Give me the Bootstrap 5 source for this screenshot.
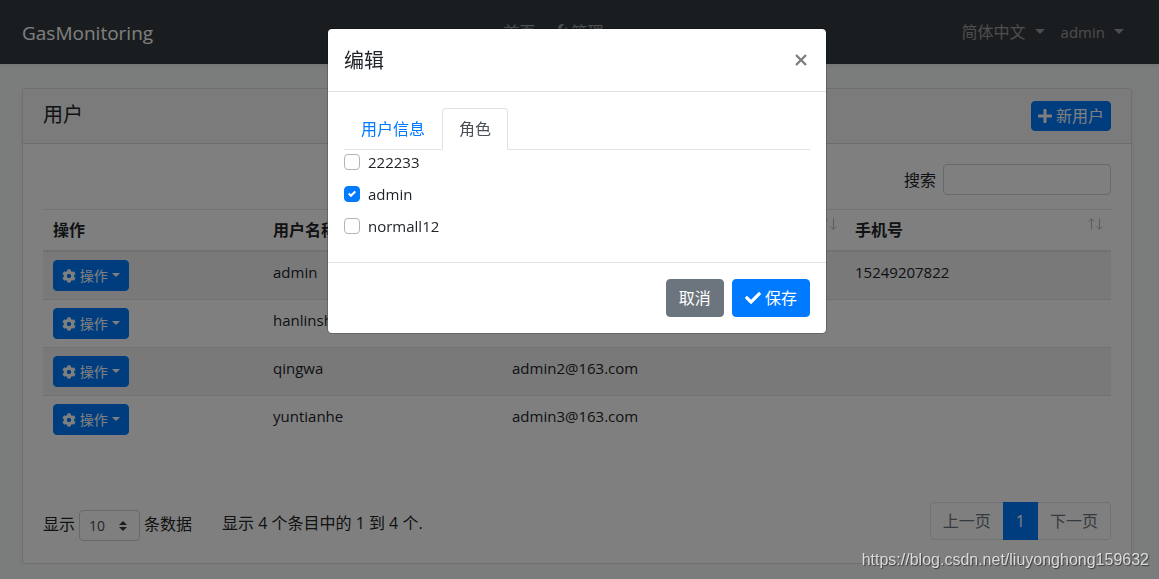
<!DOCTYPE html>
<html lang="zh-CN">
<head>
<meta charset="utf-8">
<meta name="viewport" content="width=device-width, initial-scale=1">
<title>GasMonitoring</title>
<link href="https://cdn.jsdelivr.net/npm/bootstrap@5.3.0/dist/css/bootstrap.min.css" rel="stylesheet">
<style>
  :root { --brand-blue: #007bff; }
  body {
    font-family: "Open Sans", "Noto Sans CJK SC", sans-serif;
    font-size: 16px; line-height: 24px; color: #212529; background: #f7faf9;
  }
  .latin { font-size: 15px; }
  .page-gutter { padding-left: 22px; padding-right: 27px; }
  .icon { fill: currentColor; display: inline-block; vertical-align: -2px; }

  .topbar { background: #343a40; min-height: 64px; position: relative; }
  .topbar .navbar-brand { font-size: 19px; line-height: 30px; color: #fff; margin: 0; padding: 5px 0 3px; }
  .topbar .nav-link { color: rgba(255,255,255,.5); padding: 8px; }
  .dropdown-toggle::after { margin-left: 9px; vertical-align: 4px; border-width: 5px 5px 0; }

  .panel { --bs-card-border-color: rgba(0,0,0,.125); --bs-card-border-radius: 4px; }
  .panel .card-header { padding: 12px 20px; background: rgba(0,0,0,.03); min-height: 55px; }
  .panel .card-header h1 { font-size: 20px; line-height: 28px; font-weight: 400; margin: 0; }
  .panel .card-body { padding: 20px 20px 22px; }

  .btn { --bs-btn-border-radius: 4px; line-height: 24px; }
  .btn-primary { --bs-btn-bg: var(--brand-blue); --bs-btn-border-color: var(--brand-blue); }
  .btn-secondary { --bs-btn-bg: #6c757d; --bs-btn-border-color: #6c757d; }
  .btn-new { padding: 2px 6px; }
  .btn-act { font-size: 14px; line-height: 21px; padding: 4px 8px; }
  .btn-act::after { margin-left: 4px; border-width: 4px 4px 0; }

  .search-row { margin-bottom: 14px; }
  .search-row label { margin-right: 7px; }
  .search-box { width: 168px; height: 31px; border-color: #ced4da; border-radius: 4px; }
  .user-table { table-layout: fixed; --bs-table-color: #212529; }
  .user-table > :not(caption) > * > * { padding: 8px 10px; border-bottom: 0; border-top: 1px solid #dee2e6; box-shadow: none; }
  .user-table > thead > tr > th { border-bottom: 2px solid #dee2e6; line-height: 24px; vertical-align: top; }
  .user-table > tbody > tr:first-child > td { border-top: 0; }
  .user-table > tbody > tr:nth-child(odd) > td { background: #f2f2f2; }
  .col-act { width: 220px; } .col-user { width: 239px; } .col-phone { width: 266px; }
  .sort-mark { fill: none; stroke: #212529; opacity: .3; margin: -1px -2px 0 0; }

  .table-foot { margin-top: 59px; }
  .table-foot .foot-text { padding-bottom: 3px; }
  .table-foot .foot-info { padding: 9px 0 0 30px; }
  .len-select {
    width: 61px; height: 31px; font-size: 14px; line-height: 21px; padding: 4px 8px 4px 9px; color: #495057;
    border-color: #ced4da; border-radius: 4px; background-size: 8px 10px; background-position: right 12px center;
    background-image: url("data:image/svg+xml,%3csvg xmlns='http://www.w3.org/2000/svg' viewBox='0 0 4 5'%3e%3cpath fill='%23343a40' d='M2 0L0 2h4zm0 5L0 3h4z'/%3e%3c/svg%3e");
  }
  .pagination { --bs-pagination-color: #6c757d; --bs-pagination-border-color: #dee2e6; --bs-pagination-border-radius: 4px; --bs-pagination-active-bg: var(--brand-blue); --bs-pagination-active-border-color: var(--brand-blue); }
  .pagination .page-link { padding: 6px 12px; line-height: 24px; background: #fff; }
  .pagination .active .page-link { background: var(--brand-blue); }

  .modal { padding-right: 5px; }
  .modal-content { --bs-modal-border-radius: 5px; border: 1px solid rgba(0,0,0,.2); }
  .modal-header { padding: 16px; border-color: #dee2e6; border-radius: 0; }
  .modal-title { font-size: 20px; line-height: 28px; font-weight: 400; padding-top: 2px; }
  .close-x { border: 0; background: none; padding: 0; width: 18px; height: 24px; color: #7f7f7f; }
  .modal-footer { padding: 16px; gap: 8px; border-color: #dee2e6; }
  .modal-footer > * { margin: 0; }
  .nav-tabs .nav-link { padding: 8px 16px; color: var(--brand-blue); border-radius: 4px 4px 0 0; line-height: 24px; }
  .nav-tabs .nav-link.active { color: #495057; }
  .role-check { display: flex; gap: 8px; margin-bottom: 8px; padding: 0; min-height: 24px; }
  .role-check .form-check-input { margin: 4px 0 0; float: none; border-color: #adb5bd; border-radius: 4px; width: 16px; height: 16px; }
  .role-check .form-check-input:checked {
    background-color: var(--brand-blue); border-color: var(--brand-blue); background-size: 8px 8px;
    background-image: url("data:image/svg+xml,%3csvg xmlns='http://www.w3.org/2000/svg' viewBox='0 0 8 8'%3e%3cpath fill='%23fff' d='M6.564.75l-3.59 3.612-1.538-1.55L0 4.26l2.974 2.99L8 2.193z'/%3e%3c/svg%3e");
  }
  .source-url {
    position: fixed; right: 10px; bottom: 8px; z-index: 1100; pointer-events: none;
    font: 16px/22px "Liberation Sans", Arial, sans-serif; color: rgba(255,255,255,.75); text-shadow: 1px 1px 1px rgba(0,0,0,.5);
  }
</style>
</head>
<body class="modal-open overflow-hidden">
<svg class="d-none" aria-hidden="true">
  <symbol id="i-cog" viewBox="0 0 512 512"><path d="M487.4 315.7l-42.600-24.600c4.300-23.200 4.300-47 0-70.200l42.600-24.600c4.900-2.800 7.100-8.600 5.500-14-11.100-35.600-30-67.800-54.700-94.600-3.800-4.100-10-5.100-14.800-2.300L380.800 110c-17.900-15.400-38.500-27.300-60.800-35.100V25.800c0-5.600-3.900-10.500-9.400-11.700-36.700-8.200-74.300-7.800-109.200 0-5.500 1.200-9.400 6.100-9.400 11.700V75c-22.200 7.900-42.800 19.800-60.800 35.100L88.700 85.500c-4.900-2.800-11-1.900-14.800 2.300-24.700 26.700-43.600 58.900-54.700 94.600-1.700 5.400.6 11.200 5.500 14L67.300 221c-4.300 23.200-4.300 47 0 70.200l-42.600 24.600c-4.900 2.800-7.100 8.600-5.500 14 11.100 35.600 30 67.800 54.700 94.600 3.800 4.100 10 5.100 14.800 2.300l42.600-24.600c17.900 15.400 38.500 27.300 60.800 35.100v49.200c0 5.600 3.900 10.500 9.400 11.700 36.700 8.200 74.300 7.800 109.200 0 5.500-1.200 9.400-6.100 9.400-11.700v-49.200c22.200-7.900 42.800-19.800 60.800-35.100l42.600 24.600c4.900 2.800 11 1.900 14.800-2.300 24.700-26.700 43.600-58.900 54.700-94.600 1.500-5.500-.7-11.300-5.600-14.100zM256 336c-44.100 0-80-35.900-80-80s35.900-80 80-80 80 35.900 80 80-35.900 80-80 80z"/></symbol>
  <symbol id="i-plus" viewBox="0 0 448 512"><path d="M416 208H272V64c0-17.670-14.330-32-32-32h-32c-17.670 0-32 14.330-32 32v144H32c-17.670 0-32 14.330-32 32v32c0 17.670 14.330 32 32 32h144v144c0 17.670 14.330 32 32 32h32c17.670 0 32-14.330 32-32V304h144c17.670 0 32-14.330 32-32v-32c0-17.670-14.330-32-32-32z"/></symbol>
  <symbol id="i-check" viewBox="0 0 512 512"><path d="M173.898 439.404l-166.400-166.400c-9.997-9.997-9.997-26.206 0-36.204l36.203-36.204c9.997-9.998 26.207-9.998 36.204 0L192 312.690 432.095 72.596c9.997-9.997 26.207-9.997 36.204 0l36.203 36.204c9.997 9.997 9.997 26.206 0 36.204l-294.400 294.401c-9.998 9.997-26.207 9.997-36.204-.001z"/></symbol>
  <symbol id="i-wrench" viewBox="0 0 512 512"><path d="M507.730 109.100c-2.240-9.030-13.540-12.090-20.120-5.510l-74.360 74.360-67.880-11.310-11.310-67.880 74.360-74.360c6.620-6.620 3.430-17.900-5.660-20.160-47.380-11.740-99.550.91-136.580 37.930-39.640 39.640-50.550 97.100-34.050 147.200L18.740 402.760c-24.990 24.990-24.990 65.510 0 90.500 24.990 24.990 65.510 24.990 90.500 0l213.210-213.210c50.120 16.710 107.470 5.680 147.370-34.220 37.070-37.070 49.700-89.320 37.910-136.730zM64 472c-13.250 0-24-10.750-24-24 0-13.260 10.750-24 24-24s24 10.740 24 24c0 13.250-10.750 24-24 24z"/></symbol>
  <symbol id="i-sort" viewBox="0 0 16 14"><path d="M4.500 13V2M2 4.500l2.500-3 2.500 3M12.500 1v11M10 9.500l2.500 3 2.500-3"/></symbol>
</svg>

<nav class="topbar page-gutter navbar-dark d-flex align-items-center justify-content-between shadow-sm">
  <a class="navbar-brand" href="#">GasMonitoring</a>
  <ul class="nav">
    <li class="nav-item"><a class="nav-link" href="#">首页</a></li>
    <li class="nav-item"><a class="nav-link" href="#"><svg class="icon" width="16" height="16"><use href="#i-wrench"/></svg> 管理</a></li>
  </ul>
  <ul class="nav">
    <li class="nav-item"><a class="nav-link dropdown-toggle" href="#">简体中文</a></li>
    <li class="nav-item"><a class="nav-link dropdown-toggle latin" href="#">admin</a></li>
  </ul>
</nav>

<main class="page-gutter pt-4">
  <section class="card panel shadow-sm">
    <div class="card-header d-flex justify-content-between align-items-start">
      <h1>用户</h1>
      <button type="button" class="btn btn-primary btn-new"><svg class="icon" width="14" height="16"><use href="#i-plus"/></svg> 新用户</button>
    </div>
    <div class="card-body">
      <div class="d-flex justify-content-end align-items-center search-row">
        <label for="search">搜索</label>
        <input id="search" type="search" class="form-control search-box">
      </div>
      <table class="table user-table mb-0">
        <colgroup><col class="col-act"><col class="col-user"><col><col class="col-phone"></colgroup>
        <thead>
          <tr>
            <th scope="col">操作</th>
            <th scope="col">用户名称</th>
            <th scope="col"><div class="d-flex justify-content-end"><svg class="sort-mark" width="16" height="14"><use href="#i-sort"/></svg></div></th>
            <th scope="col"><div class="d-flex justify-content-between">手机号<svg class="sort-mark" width="16" height="14"><use href="#i-sort"/></svg></div></th>
          </tr>
        </thead>
        <tbody>
          <tr>
            <td><button type="button" class="btn btn-primary btn-act dropdown-toggle"><svg class="icon" width="14" height="14"><use href="#i-cog"/></svg> 操作</button></td>
            <td class="latin">admin</td><td></td><td class="latin">15249207822</td>
          </tr>
          <tr>
            <td><button type="button" class="btn btn-primary btn-act dropdown-toggle"><svg class="icon" width="14" height="14"><use href="#i-cog"/></svg> 操作</button></td>
            <td class="latin">hanlinsh</td><td></td><td></td>
          </tr>
          <tr>
            <td><button type="button" class="btn btn-primary btn-act dropdown-toggle"><svg class="icon" width="14" height="14"><use href="#i-cog"/></svg> 操作</button></td>
            <td class="latin">qingwa</td><td class="latin">admin2@163.com</td><td></td>
          </tr>
          <tr>
            <td><button type="button" class="btn btn-primary btn-act dropdown-toggle"><svg class="icon" width="14" height="14"><use href="#i-cog"/></svg> 操作</button></td>
            <td class="latin">yuntianhe</td><td class="latin">admin3@163.com</td><td></td>
          </tr>
        </tbody>
      </table>
      <div class="table-foot d-flex align-items-start">
        <div class="d-flex align-items-center pt-2">
          <label for="len" class="me-1 foot-text">显示</label>
          <select id="len" class="form-select len-select"><option>10</option></select>
          <span class="ms-1 foot-text">条数据</span>
        </div>
        <div class="foot-info">显示 4 个条目中的 1 到 4 个.</div>
        <ul class="pagination ms-auto mb-0">
          <li class="page-item"><a class="page-link" href="#">上一页</a></li>
          <li class="page-item active"><a class="page-link" href="#">1</a></li>
          <li class="page-item"><a class="page-link" href="#">下一页</a></li>
        </ul>
      </div>
    </div>
  </section>
</main>

<div class="modal-backdrop show"></div>
<div class="modal show d-block" tabindex="-1" role="dialog" aria-labelledby="dlg-title">
  <div class="modal-dialog">
    <div class="modal-content">
      <div class="modal-header">
        <h2 class="modal-title" id="dlg-title">编辑</h2>
        <button type="button" class="close-x d-flex align-items-center justify-content-center" aria-label="关闭"><svg width="12" height="12" viewBox="0 0 12 12" fill="none" stroke="currentColor" stroke-width="2.400"><path d="M1 1l10 10M11 1L1 11"/></svg></button>
      </div>
      <div class="modal-body">
        <ul class="nav nav-tabs">
          <li class="nav-item"><a class="nav-link" href="#">用户信息</a></li>
          <li class="nav-item"><a class="nav-link active" href="#">角色</a></li>
        </ul>
        <div class="role-check"><input class="form-check-input" type="checkbox" id="r1"><label class="latin" for="r1">222233</label></div>
        <div class="role-check"><input class="form-check-input" type="checkbox" id="r2" checked><label class="latin" for="r2">admin</label></div>
        <div class="role-check"><input class="form-check-input" type="checkbox" id="r3"><label class="latin" for="r3">normall12</label></div>
      </div>
      <div class="modal-footer">
        <button type="button" class="btn btn-secondary">取消</button>
        <button type="button" class="btn btn-primary"><svg class="icon" width="16" height="16"><use href="#i-check"/></svg> 保存</button>
      </div>
    </div>
  </div>
</div>
<div class="source-url">https://blog.csdn.net/liuyonghong159632</div>
<script src="https://cdn.jsdelivr.net/npm/bootstrap@5.3.0/dist/js/bootstrap.bundle.min.js"></script>
</body>
</html>
